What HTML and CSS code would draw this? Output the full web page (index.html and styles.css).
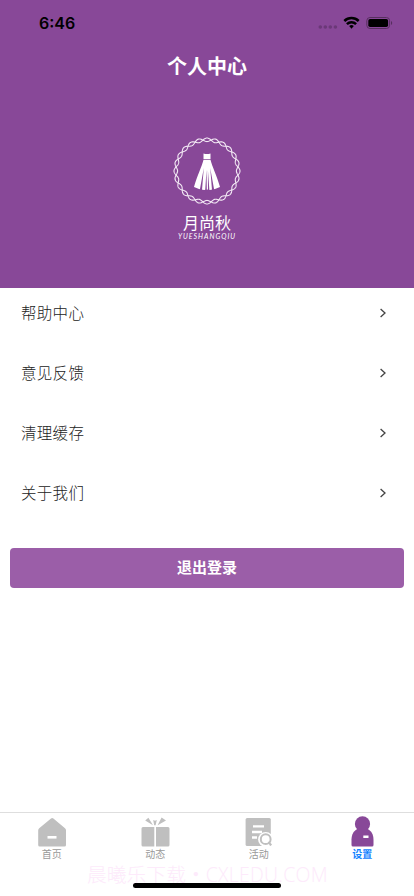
FILE: index.html
```html
<!DOCTYPE html>
<html lang="zh-CN">
<head>
<meta charset="utf-8">
<meta name="viewport" content="width=device-width, initial-scale=1">
<title>个人中心</title>
<link rel="stylesheet" href="styles.css">
</head>
<body>
<div class="app">
  <header class="hero">
    <div class="status">
      <span class="time">6:46</span>
      <svg class="indicators" width="76" height="16" viewBox="0 0 76 16">
        <g fill="#6b3878"><circle cx="2.3" cy="12" r="1.8"/><circle cx="7.3" cy="12" r="1.8"/><circle cx="12.3" cy="12" r="1.8"/><circle cx="17.4" cy="12" r="1.8"/></g>
        <g fill="none" stroke="#000" stroke-width="2.5"><path d="M26.3 6a10.4 10.4 0 0 1 14.4 0"/><path d="M28.9 9.1a6.6 6.6 0 0 1 9.2 0"/></g>
        <path d="M31.2 11.1a3.5 3.5 0 0 1 4.6 0L33.5 13.7z"/>
        <rect x="48.8" y="2.5" width="22.8" height="11" rx="3.2" fill="none" stroke="#57305f"/>
        <rect x="50.3" y="4" width="19.8" height="8" rx="1.8"/>
        <path d="M73 6v4c1.6-.6 1.6-3.4 0-4z" fill="#57305f"/>
      </svg>
    </div>
    <h1 class="title">个人中心</h1>
    <div class="brand">
      <svg width="68" height="68" viewBox="-34 -34 68 68">
        <g fill="none" stroke="#f2e8f4" stroke-width="1.1"><path class="strand"/><path class="strand"/></g>
        <path fill="#fff" d="M-3.5-17.5q3.5 1 7 0V-12H-3.5zM-3.5-11.3H3.5C5-5 10 5 13 16Q5 20 0 18.5Q-5 20-13 16C-10 5-5-5-3.5-11.3z"/>
        <path fill="#884898" d="M-3.2-3-5 19H-7.2zM3.2-3 7.2 19H5zM-.5-1-.2 19.5H-1.8zM.9-1 2.4 19.5H1z"/>
      </svg>
      <div class="name">月尚秋</div>
      <div class="latin">YUESHANGQIU</div>
    </div>
  </header>
  <main class="content">
    <div class="row"><span>帮助中心</span><svg width="8" height="10" viewBox="0 0 8 10"><path d="M1.6 1 6 5 1.6 9"/></svg></div>
    <div class="row"><span>意见反馈</span><svg width="8" height="10" viewBox="0 0 8 10"><path d="M1.6 1 6 5 1.6 9"/></svg></div>
    <div class="row"><span>清理缓存</span><svg width="8" height="10" viewBox="0 0 8 10"><path d="M1.6 1 6 5 1.6 9"/></svg></div>
    <div class="row"><span>关于我们</span><svg width="8" height="10" viewBox="0 0 8 10"><path d="M1.6 1 6 5 1.6 9"/></svg></div>
    <button class="logout">退出登录</button>
  </main>
  <nav class="tabs">
    <div class="tab">
      <svg width="32" height="32" viewBox="0 0 32 32"><path fill="#bfbfbf" d="M15 1.5q1.2-.9 2.4 0L29 11.3q1 .8 1 2V28q0 1.5-1.5 1.5H3.7q-1.5 0-1.5-1.5V13.3q0-1.2 1-2z"/><rect x="11.5" y="19" width="9" height="2.6" fill="#fff"/></svg>
      <span>首页</span>
    </div>
    <div class="tab">
      <svg width="32" height="32" viewBox="0 0 32 32" fill="#bfbfbf"><path d="M4 10H15.3V29.5H4q-1.5 0-1.5-1.5V11.5q0-1.5 1.5-1.5zM17 10H29q1.5 0 1.5 1.5V28q0 1.5-1.5 1.5H17zM6.2 3.6 9.4.8 14 8.2zM27 3.6 22.6.6 18.6 8.2zM14.2 3l1.8.8 1.8-.8-1.2 5.2H15.2z"/></svg>
      <span>动态</span>
    </div>
    <div class="tab">
      <svg width="32" height="32" viewBox="0 0 32 32"><rect x="2.6" y="1" width="25.2" height="28" rx="1.5" fill="#bfbfbf"/><path d="M10 9.4H21M9 15H19M9 20.5H14" stroke="#fff" stroke-width="2.3"/><circle cx="22.7" cy="22.5" r="7.6" fill="#fff"/><circle cx="22.7" cy="22.2" r="4.9" fill="none" stroke="#bfbfbf" stroke-width="2"/><path d="m25.3 25 3 3.2" stroke="#bfbfbf" stroke-width="2"/></svg>
      <span>活动</span>
    </div>
    <div class="tab active">
      <svg class="person" width="32" height="32" viewBox="0 0 32 32"><circle cx="16.5" cy="6.9" r="7.6" fill="#884898"/><path fill="#884898" d="M11.8 11.8H21.2C25 13.5 27.5 17.5 27.5 22.5V28q0 1.5-1.5 1.5H7q-1.5 0-1.5-1.5V22.5C5.5 17.5 8 13.5 11.8 11.8z"/><rect x="17.3" y="18.5" width="5.2" height="2.5" fill="#fff"/></svg>
      <span>设置</span>
    </div>
    <div class="watermark">晨曦乐下载<b>・</b><span>CXLEDU.COM</span></div>
    <div class="home-bar"></div>
  </nav>
</div>
<script src="ring.js"></script>
</body>
</html>
```
FILE: styles.css
```css
* { box-sizing: border-box; }
body {
  margin: 0;
  background: #fff;
  font-family: "Noto Sans CJK SC", sans-serif;
}
.app {
  height: 896px;
  display: flex;
  flex-direction: column;
  overflow: hidden;
}
.hero {
  height: 288px;
  background: #884898;
  color: #fff;
}
.status {
  height: 46px;
  padding: 0 20px 0 39px;
  display: flex;
  align-items: center;
  justify-content: space-between;
}
.time {
  font: 600 16px/20px Inter, sans-serif;
  color: #000;
}
.title {
  margin: 5px 0 0;
  font-size: 20px;
  line-height: 30px;
  font-weight: 700;
  text-align: center;
}
.brand {
  margin-top: 56px;
  display: flex;
  flex-direction: column;
  align-items: center;
}
.name {
  margin-top: 7px;
  font-size: 16px;
  line-height: 20px;
}
.latin {
  font: italic 7px/8px Lato, sans-serif;
  letter-spacing: 1px;
}
.content { flex: 1; }
.row {
  height: 60px;
  padding: 0 28px 11px 21px;
  display: flex;
  align-items: center;
  justify-content: space-between;
  font-size: 15.5px;
  font-weight: 300;
  letter-spacing: 0.3px;
  color: #222;
}
.row span { margin-top: -2px; }
.row svg {
  margin-right: -1px;
  fill: none;
  stroke: #444;
  stroke-width: 1.3;
}
.logout {
  display: block;
  width: 394px;
  height: 40px;
  margin: 20px 10px 0;
  padding: 0 0 2px;
  border: 0;
  border-radius: 4px;
  background: #9b5ea8;
  color: #fff;
  font: 700 15px/36px "Noto Sans CJK SC", sans-serif;
}
.tabs {
  position: relative;
  height: 84px;
  border-top: 1px solid #dedede;
  display: flex;
}
.tab {
  flex: 1;
  padding-top: 4px;
  display: flex;
  flex-direction: column;
  align-items: center;
  font-size: 10px;
  line-height: 12px;
  color: #999;
}
.tab span { margin-top: -1px; }
.active { color: #1283ff; font-weight: 700; }
.person { overflow: visible; }
.watermark {
  position: absolute;
  left: 87px;
  top: 49px;
  font-size: 19.8px;
  line-height: 24px;
  font-weight: 300;
  white-space: nowrap;
  color: #fdeafb;
}
.watermark span {
  font-family: "Open Sans", "Noto Sans", sans-serif;
  font-size: 19.5px;
  letter-spacing: 0.25px;
}
.home-bar {
  position: absolute;
  left: 133px;
  bottom: 8px;
  width: 148px;
  height: 5px;
  border-radius: 3px;
  background: #000;
}
```
FILE: ring.js
```js
// Two braided strands around the logo.
document.querySelectorAll('.strand').forEach(function (path, i) {
  var points = [];
  for (var k = 0; k < 360; k++) {
    var a = k * Math.PI / 180;
    var r = 31.2 + (i ? -1.8 : 1.8) * Math.cos(a * 12);
    points.push((r * Math.cos(a)).toFixed(2) + ' ' + (r * Math.sin(a)).toFixed(2));
  }
  path.setAttribute('d', 'M' + points.join('L') + 'Z');
});
```
